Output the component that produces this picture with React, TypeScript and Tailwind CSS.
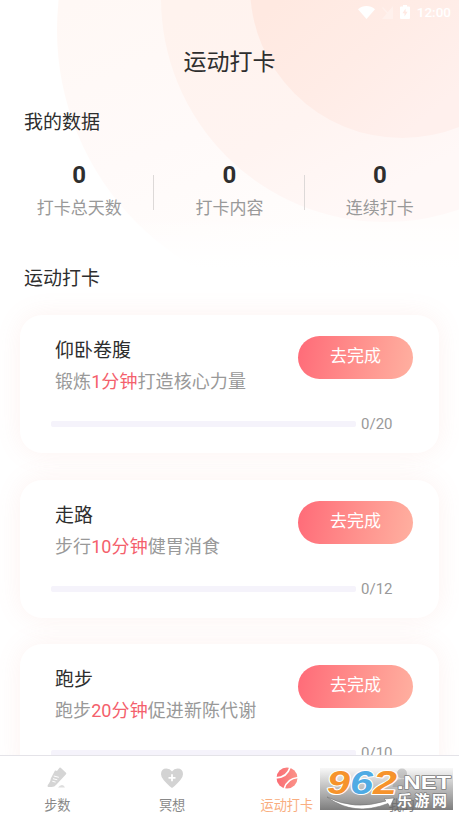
import React from "react";

const stats = [
  { value: 0, label: "打卡总天数" },
  { value: 0, label: "打卡内容" },
  { value: 0, label: "连续打卡" },
];

const tasks = [
  { name: "仰卧卷腹", before: "锻炼", time: "1分钟", after: "打造核心力量", total: 20 },
  { name: "走路", before: "步行", time: "10分钟", after: "健胃消食", total: 12 },
  { name: "跑步", before: "跑步", time: "20分钟", after: "促进新陈代谢", total: 10 },
];

function Backdrop() {
  return (
    <svg className="absolute left-0 top-0" width="459" height="310" viewBox="0 0 459 310">
      <defs>
        <linearGradient id="outer" gradientUnits="userSpaceOnUse" x1="80" y1="0" x2="200" y2="280">
          <stop offset="0" stopColor="#fff8f5" />
          <stop offset="0.55" stopColor="#fffaf9" />
          <stop offset="1" stopColor="#fffdfc" />
        </linearGradient>
        <linearGradient id="middle" gradientUnits="userSpaceOnUse" x1="200" y1="0" x2="330" y2="225">
          <stop offset="0" stopColor="#fff3ee" />
          <stop offset="0.6" stopColor="#fff4f1" />
          <stop offset="1" stopColor="#fff8f7" />
        </linearGradient>
        <linearGradient id="inner" gradientUnits="userSpaceOnUse" x1="280" y1="0" x2="400" y2="140">
          <stop offset="0" stopColor="#ffe9e1" />
          <stop offset="0.5" stopColor="#ffece6" />
          <stop offset="1" stopColor="#fff0ed" />
        </linearGradient>
        <linearGradient id="fade" x1="0" y1="0" x2="0" y2="1">
          <stop offset="0" stopColor="#fff" stopOpacity="0" />
          <stop offset="1" stopColor="#fff" />
        </linearGradient>
      </defs>
      <circle cx="330" cy="30" r="273" fill="url(#outer)" />
      <circle cx="385" cy="-2" r="224" fill="url(#middle)" />
      <circle cx="402" cy="-14" r="152" fill="url(#inner)" />
      <rect y="215" width="459" height="53" fill="url(#fade)" />
      <rect y="267" width="459" height="43" fill="#fff" />
    </svg>
  );
}

function StatusBar() {
  return (
    <div className="flex h-6 shrink-0 items-center justify-end pr-2 text-white">
      <svg width="17" height="13" viewBox="0 0 17 13" fill="currentColor">
        <path d="M0 3.2C5-1 12-1 17 3.2L8.5 13z" />
      </svg>
      <svg className="ml-1.5 opacity-30" width="13" height="13" viewBox="0 0 13 13" fill="currentColor">
        <path d="M12 0v13H1zM1 2l1-1 10 11-1 1z" />
      </svg>
      <svg className="ml-1.5" width="10" height="14" viewBox="0 0 10 14">
        <path d="M3 0h4v1.5h2q1 0 1 1V13q0 1-1 1H1q-1 0-1-1V2.500q0-1 1-1h2z" fill="#fff" />
        <path d="M5.600 3.500 2.500 8.300h2v3.200l3.100-4.800h-2z" fill="#ffe9e3" />
      </svg>
      <span className="ml-[7px] text-[13.500px] font-medium leading-5">12:00</span>
    </div>
  );
}

function TaskCard({ task }: { task: (typeof tasks)[number] }) {
  return (
    <div className="h-[138px] shrink-0 rounded-[22px] bg-white pl-[31px] pr-[26px] pt-[21px] shadow-[0_0_26px_rgba(240,140,115,0.11)]">
      <div className="flex h-[78px] justify-between">
        <div className="pl-1 pt-px">
          <h3 className="h-[30px] text-[19px] leading-[28px] text-[#2e2e2e]">{task.name}</h3>
          <p className="text-[18px] leading-[30px] tracking-[0.08px] text-[#999]">
            {task.before}
            <span className="text-[#f4606c]">{task.time}</span>
            {task.after}
          </p>
        </div>
        <button className="h-[43px] w-[115px] rounded-full bg-linear-100 from-[#ff6a78] to-[#ffb0a0] pb-[3px] text-[17px] leading-[40px] text-white">
          去完成
        </button>
      </div>
      <div className="flex h-5 items-center">
        <div className="h-1.5 w-[305px] rounded-[2px] bg-[#f5f3fb]" />
        <span className="ml-[5px] text-[15px] leading-5 text-[#999]">0/{task.total}</span>
      </div>
    </div>
  );
}

function ShoeIcon() {
  return (
    <svg width="20" height="22" viewBox="0 0 20 22">
      <path d="M8.500 3.500 10 4 12.500.8q.6-.5 1.200 0L19 5.800q.7.7 0 1.500L9.500 17.500Q7.500 20 4.500 20H1.200Q0 19.500.8 18l1.400-2Q3.500 14.500 3.800 11.500L8 3.500z" fill="#d5d5d5" />
      <path d="m6.800 9 5 1.300M6 11.700l4.300 1.100M5.300 14.300l3.300.8" stroke="#fff" strokeWidth="1" />
      <path d="M11 20.500q1.800-2.500 4-2.500 2.200.3 2.800 2.200v.3z" fill="#dedede" />
    </svg>
  );
}

function HeartIcon() {
  return (
    <svg width="24" height="22" viewBox="0 0 24 22">
      <path d="M12 21Q10.500 20.500 4 13.500 1 10.500 1 7.200 1 1.500 6.500 1.500 10 1.500 12 4.400 14 1.500 17.500 1.500 23 1.500 23 7.200 23 10.500 20 13.500 13.500 20.500 12 21z" fill="#d3d3d3" />
      <path d="M12 7.300v7M8.500 10.800h7" stroke="#fff" strokeWidth="1.800" />
    </svg>
  );
}

function BallIcon() {
  return (
    <svg width="22" height="22" viewBox="0 0 22 22">
      <defs>
        <linearGradient id="ball" x1="0" y1="0" x2="1" y2="0">
          <stop offset="0" stopColor="#fa6c74" />
          <stop offset="1" stopColor="#fb9388" />
        </linearGradient>
      </defs>
      <circle cx="11" cy="11" r="10.500" fill="url(#ball)" />
      <path d="M0 10.800Q11 10.500 14 .5M8 22Q11 11.500 22 10.500" fill="none" stroke="#fff" strokeWidth="1.700" />
    </svg>
  );
}

function UserIcon() {
  return (
    <svg width="22" height="22" viewBox="0 0 22 22" fill="#d3d3d3">
      <circle cx="11" cy="6.500" r="5" />
      <path d="M1.500 20q1-8 9.500-8t9.500 8z" />
    </svg>
  );
}

const tabs = [
  { label: "步数", icon: <ShoeIcon /> },
  { label: "冥想", icon: <HeartIcon /> },
  { label: "运动打卡", icon: <BallIcon />, active: true },
  { label: "我的", icon: <UserIcon /> },
];

function TabBar() {
  return (
    <nav className="relative grid h-[61px] shrink-0 grid-cols-4 border-t border-[#e4e3e8] bg-white">
      {tabs.map((tab) => (
        <div key={tab.label} className="flex flex-col items-center pt-[11px]">
          {tab.icon}
          <span className={`mt-[7px] text-[13.200px] leading-5 ${tab.active ? "text-[#f9ae80]" : "text-[#888]"}`}>
            {tab.label}
          </span>
        </div>
      ))}
    </nav>
  );
}

function Watermark() {
  return (
    <svg className="absolute bottom-[6px] right-[6px] overflow-visible" width="133" height="42" viewBox="0 0 133 42">
      <defs>
        <linearGradient id="plate" x1="0" y1="0" x2="0" y2="1">
          <stop offset="0" stopColor="#777" stopOpacity="0.05" />
          <stop offset="0.5" stopColor="#777" stopOpacity="0.5" />
          <stop offset="1" stopColor="#666" stopOpacity="0.85" />
        </linearGradient>
      </defs>
      <rect width="133" height="42" fill="url(#plate)" />
      <g
        fontFamily="'Liberation Sans', sans-serif"
        fontWeight="700"
        fontStyle="italic"
        fontSize="33"
        stroke="#fff"
        strokeWidth="2"
        strokeLinejoin="round"
        paintOrder="stroke"
      >
        <text x="7" y="26" textLength="23" lengthAdjust="spacingAndGlyphs" fill="#f6932c">9</text>
        <text x="30" y="26" textLength="23" lengthAdjust="spacingAndGlyphs" fill="#4fabe4">6</text>
        <text x="53" y="26" textLength="24" lengthAdjust="spacingAndGlyphs" fill="#f6932c">2</text>
      </g>
      <path d="M7 29Q34 43 66 33L64 31 74 30 70 39 68 35.500Q34 49 7 29z" fill="#fff" stroke="#777" strokeWidth="0.600" />
      <g fill="#fff" stroke="#808080" strokeWidth="1.500" strokeLinejoin="round" paintOrder="stroke">
        <text x="77" y="21" textLength="54" lengthAdjust="spacingAndGlyphs" fontFamily="'Liberation Sans', sans-serif" fontWeight="700" fontSize="19">.NET</text>
        <text x="77" y="38" textLength="50" fontFamily="'Noto Sans CJK SC', sans-serif" fontWeight="700" fontSize="15">乐游网</text>
      </g>
    </svg>
  );
}

function App() {
  return (
    <main className="relative flex h-[816px] w-[459px] flex-col overflow-hidden bg-white font-[Roboto,'Noto_Sans_CJK_SC',sans-serif]">
      <Backdrop />
      <div className="relative flex min-h-0 flex-1 flex-col overflow-hidden">
        <StatusBar />
        <h1 className="mt-[21px] shrink-0 text-center text-[23px] leading-9 text-[#2e2e2e]">运动打卡</h1>
        <h2 className="mt-7 shrink-0 pl-6 text-[19px] leading-7 text-[#2e2e2e]">我的数据</h2>
        <div className="mx-1 mt-[25px] grid shrink-0 grid-cols-3">
          {stats.map((stat, i) => (
            <div key={stat.label} className="relative flex flex-col items-center">
              <span className="text-[24px] font-bold leading-[26px] text-[#2e2e2e]">{stat.value}</span>
              <span className="mt-[7px] text-[17px] leading-[26px] text-[#999]">{stat.label}</span>
              {i > 0 && <i className="absolute -left-px top-[13px] h-[35px] w-px bg-[#ddd9d8]" />}
            </div>
          ))}
        </div>
        <h2 className="mt-[44px] shrink-0 pl-6 text-[19px] leading-7 text-[#2e2e2e]">运动打卡</h2>
        <div className="mx-5 mt-[22px] flex flex-col gap-[26.500px]">
          {tasks.map((task) => (
            <TaskCard key={task.name} task={task} />
          ))}
        </div>
      </div>
      <TabBar />
      <Watermark />
    </main>
  );
}

export default App;
